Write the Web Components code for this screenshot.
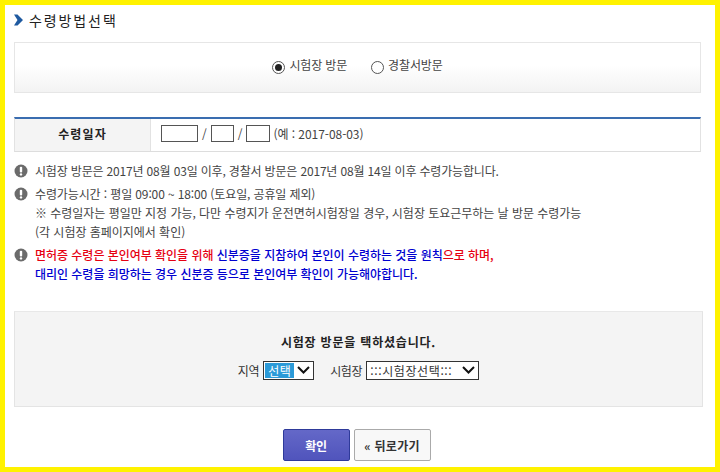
<!DOCTYPE html>
<html lang="ko"><head><meta charset="utf-8"><style>
html,body{margin:0;padding:0;background:#fff}
body{font:12px/19px "Noto Sans CJK KR","Noto Sans",sans-serif;color:#444}
</style></head><body>
<receipt-page>
<section-title>수령방법선택</section-title>
<radio-panel></radio-panel>
<date-row></date-row>
<notice-list></notice-list>
<select-panel></select-panel>
<action-bar></action-bar>
</receipt-page>
<script>
function def(name,css,html){
  customElements.define(name,class extends HTMLElement{
    constructor(){super();const r=this.attachShadow({mode:'open'});r.innerHTML='<style>'+css+'</style>'+html;}
  });
}
def('receipt-page',`:host{display:block;box-sizing:border-box;width:720px;height:472px;border:5px solid #fff200;padding:5px 14px 0 9px;overflow:hidden;background:#fff}`,`<slot></slot>`);
def('section-title',`:host{display:flex;align-items:center;gap:6px;height:20px;margin-bottom:12px;font-size:14px;font-weight:400;color:#222;letter-spacing:1.9px}
svg{flex:none}`,`<svg width="9" height="12" viewBox="0 0 9 12"><path d="M0 0.5h3.5L9 6l-5.5 5.5H0L3.5 6z" fill="#1f5aa0"/></svg><slot></slot>`);
def('radio-panel',`:host{display:flex;justify-content:center;align-items:flex-start;box-sizing:border-box;height:51px;padding:12px 0 0 0;border:1px solid #e6e6e6;background:linear-gradient(#fff 45%,#f3f3f3);letter-spacing:-.15px;font-size:12px;color:#444}
label{display:flex;align-items:center;gap:4px}
label:first-child{letter-spacing:.1px}
label+label{margin-left:24px}
i{display:block;box-sizing:border-box;width:13px;height:13px;border:1px solid #555;border-radius:50%;background:#fff;margin-top:5px;position:relative}
i.on::after{content:"";position:absolute;left:2px;top:2px;width:7px;height:7px;border-radius:50%;background:#222}`,
`<label><i class="on"></i>시험장 방문</label><label><i></i>경찰서방문</label>`);
def('date-row',`:host{display:flex;box-sizing:border-box;height:35px;margin-top:24px;border-top:2px solid #3a6db0;border-bottom:1px solid #ddd;border-right:1px solid #e2e2e2;border-left:1px solid #e2e2e2;font-size:12px}
.h{flex:none;width:135px;display:flex;align-items:center;justify-content:center;background:#f4f4f4;border-right:1px solid #e2e2e2;font-weight:700;color:#222;box-sizing:content-box;letter-spacing:1.1px;padding-bottom:2px;height:30px}
.h span{position:static;margin-top:-2px}
.c{display:flex;align-items:center;padding:0 0 3px 10px;color:#444;height:29px;font-size:12px}
b{display:block;box-sizing:border-box;height:17px;border:1px solid #555;background:#fff}
s{text-decoration:none;margin:0 4px;font-size:12px}
em{font-style:normal;margin-left:3px;letter-spacing:-.05px;margin-top:-1px}`,
`<div class="h"><span>수령일자</span></div><div class="c"><b style="width:37px"></b><s>/</s><b style="width:23px"></b><s>/</s><b style="width:24px"></b><em>(예 : 2017-08-03)</em></div>`);
def('notice-list',`:host{display:block;margin-top:9px;font-size:12px;line-height:19px;letter-spacing:-.03px;color:#444}
.n{display:flex;gap:7px;margin-bottom:4px}
.a{letter-spacing:-.17px}
.b{letter-spacing:-.12px}
svg{flex:none;margin-top:3px}
.r{color:#e60012;font-weight:500}.u{color:#0000d0;font-weight:500}`,
`<div class="n">${ic()}<div class="a">시험장 방문은 2017년 08월 03일 이후, 경찰서 방문은 2017년 08월 14일 이후 수령가능합니다.</div></div>
<div class="n">${ic()}<div><span class="b">수령가능시간 : 평일 09:00 ~ 18:00 (토요일, 공휴일 제외)</span><br>※ 수령일자는 평일만 지정 가능, 다만 수령지가 운전면허시험장일 경우, 시험장 토요근무하는 날 방문 수령가능<br>(각 시험장 홈페이지에서 확인)</div></div>
<div class="n">${ic()}<div><span class="r">면허증 수령은 본인여부 확인을 위해</span> <span class="u">신분증을 지참하여 본인이 수령하는 것을 원칙</span><span class="r">으로 하며,</span><br><span class="u">대리인 수령을 희망하는 경우 신분증 등으로 본인여부 확인이 가능해야합니다.</span></div></div>`);
function ic(){return `<svg width="14" height="14" viewBox="0 0 14 14"><circle cx="7" cy="7" r="6.5" fill="#6b6b6b"/><rect x="5.8" y="2.8" width="2.4" height="5.6" rx="1" fill="#fff"/><circle cx="7" cy="10.4" r="1.2" fill="#fff"/></svg>`}
def('select-panel',`:host{display:block;box-sizing:border-box;height:96px;margin-top:28px;margin-right:-2px;padding-top:20px;background:#f4f4f4;border:1px solid #e4e4e4;border-top-color:#e8e8e8;text-align:center;font-size:12px;color:#222}
h3{margin:0;font-size:12px;line-height:19px;font-weight:700;color:#222;letter-spacing:.8px}
.row{display:flex;justify-content:center;align-items:center;gap:4px;margin-top:9px;height:20px;letter-spacing:-.3px;color:#333}
.s{display:flex;align-items:center;box-sizing:border-box;height:19px;border:1px solid #333;background:#fff;padding:1px}
.s svg{flex:none;margin:0 2px 0 3px}
.hl{flex:none;background:#2b9ad8;color:#fff;padding:0 3px;height:15px;line-height:15px;letter-spacing:.6px;white-space:nowrap}
.t{letter-spacing:.6px;padding-left:2px;line-height:15px;white-space:nowrap}
.g{width:8px}`,
`<h3>시험장 방문을 택하셨습니다.</h3><div class="row"><span>지역</span><div class="s" style="width:51px"><span class="hl">선택</span><svg width="13" height="8" viewBox="0 0 13 8"><path d="M1 1l5.5 5.5L12 1" fill="none" stroke="#111" stroke-width="2"/></svg></div><span class="g"></span><span>시험장</span><div class="s" style="width:113px;justify-content:space-between"><span class="t">:::시험장선택:::</span><svg width="13" height="8" viewBox="0 0 13 8"><path d="M1 1l5.5 5.5L12 1" fill="none" stroke="#111" stroke-width="2"/></svg></div></div>`);
def('action-bar',`:host{display:flex;justify-content:center;gap:4px;margin-top:22px;padding-right:2px}
button{box-sizing:border-box;height:32px;font:700 12px "Noto Sans CJK KR","Noto Sans",sans-serif;padding:0;border-radius:2px;letter-spacing:-.2px}
.p{width:67px;color:#fff;background:linear-gradient(#6468c8,#5054bc);border:1px solid #2e3a9a}
.q{width:77px;color:#333;background:#f8f8f8;border:1px solid #aaa;letter-spacing:.3px}`,
`<button class="p">확인</button><button class="q">« 뒤로가기</button>`);
</script>
</body></html>
